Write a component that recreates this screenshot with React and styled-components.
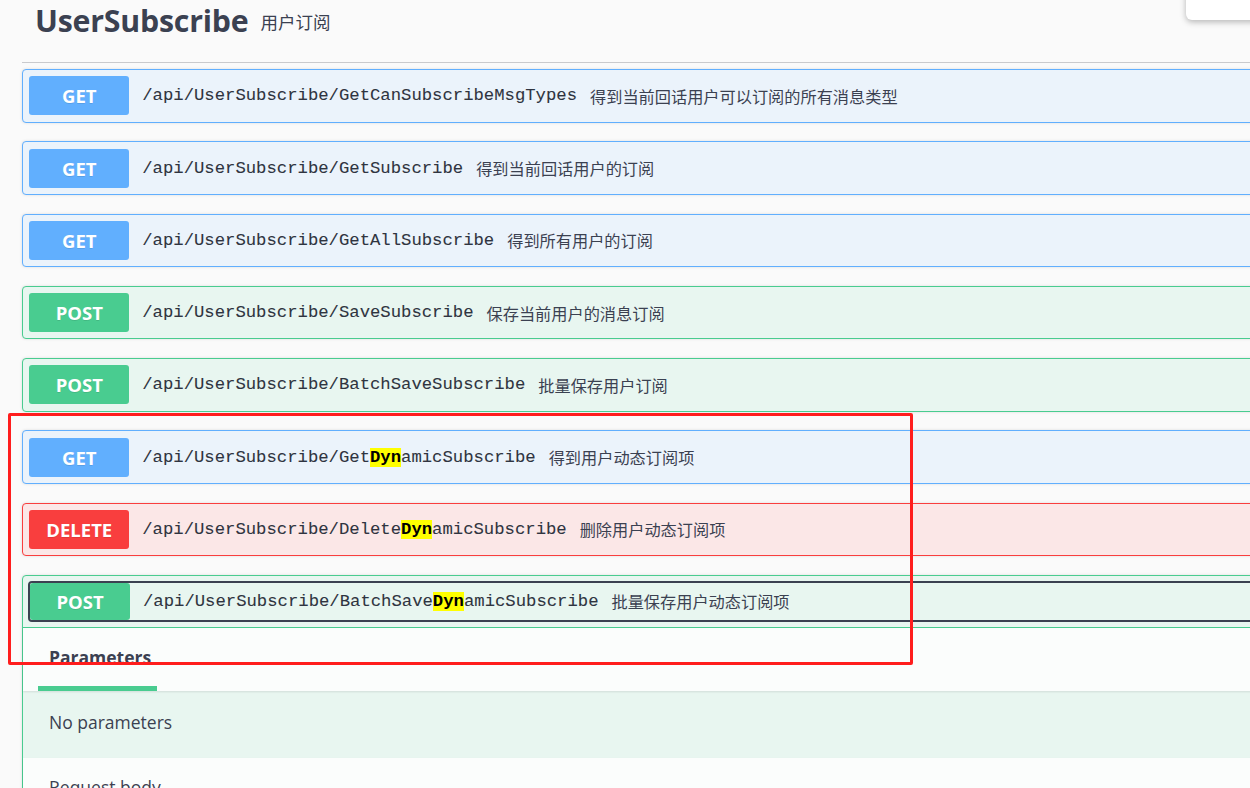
import React from "react";
import styled, { createGlobalStyle, css } from "styled-components";

const Global = createGlobalStyle`
  html, body { margin: 0; padding: 0; }
  body {
    background: #fafafa;
    overflow: hidden;
    font-family: "Open Sans", "Noto Sans CJK SC", sans-serif;
    color: #3b4151;
  }
`;

const METHODS = {
  GET: { main: "#61affe", bg: "#ebf3fb" },
  POST: { main: "#49cc90", bg: "#e8f6f0" },
  DELETE: { main: "#f93e3e", bg: "#fbe7e7" },
};

const Page = styled.div`
  position: relative;
  width: 1250px;
  height: 788px;
  overflow: hidden;
`;

const Content = styled.div`
  width: 1300px;
  padding-left: 22px;
`;

const TagHeader = styled.div`
  height: 62px;
  padding-left: 13px;
  border-bottom: 1px solid #c9cacd;
  margin-bottom: 6px;
  display: flex;
  align-items: flex-start;
`;

const TagTitle = styled.div`
  height: 40px;
  display: flex;
  align-items: center;
  gap: 12px;
`;

const TagName = styled.span`
  font-family: "Open Sans", sans-serif;
  font-weight: 700;
  font-size: 30.3px;
  color: #3b4151;
  letter-spacing: -0.2px;
`;

const TagDesc = styled.span`
  font-family: "Noto Sans CJK SC", sans-serif;
  font-size: 17.5px;
  color: #3b4151;
  margin-top: 2px;
`;

const OpBlock = styled.div`
  border: 1px solid ${(p) => METHODS[p.$m].main};
  background: ${(p) => METHODS[p.$m].bg};
  border-radius: 4px;
  margin-bottom: 18.75px;
  box-shadow: 0 0 3px rgba(0, 0, 0, 0.12);
`;

const Summary = styled.div`
  display: flex;
  align-items: center;
  padding: 6.25px;
  ${(p) =>
    p.$open &&
    css`
      padding: 5px 6px 5px 5px;
      border-bottom: 1px solid ${METHODS[p.$m].main};
    `}
`;

const Control = styled.div`
  flex: 1;
  display: flex;
  align-items: center;
  height: 41px;
  box-sizing: border-box;
  border: 2px solid #3b4151;
  border-radius: 4px;
`;

const Badge = styled.span`
  flex: none;
  width: 100px;
  height: ${(p) => (p.$open ? 37 : 39)}px;
  border-radius: 3px;
  background: ${(p) => METHODS[p.$m].main};
  color: #fff;
  font-family: "Open Sans", sans-serif;
  font-weight: 700;
  font-size: 18.5px;
  display: flex;
  align-items: center;
  justify-content: center;
  text-shadow: 0 1px 0 rgba(0, 0, 0, 0.1);
`;

const Path = styled.span`
  padding: 0 13px;
  font-family: "Liberation Mono", monospace;
  font-size: 17.25px;
  color: #2f3440;
  -webkit-text-stroke: 0.08px #2f3440;
  white-space: nowrap;
`;

const Mark = styled.mark`
  background: #ffff00;
  color: #000;
  font-weight: 700;
  -webkit-text-stroke: 0;
`;

const Desc = styled.span`
  font-family: "Noto Sans CJK SC", sans-serif;
  font-size: 16.2px;
  color: #3b4151;
  white-space: nowrap;
`;

const SectionHeader = styled.div`
  height: 63px;
  background: rgba(255, 255, 255, 0.8);
  box-shadow: 0 1px 2px rgba(0, 0, 0, 0.1);
  display: flex;
  align-items: stretch;
  padding-left: 15px;
`;

const Tab = styled.div`
  width: 119px;
  box-sizing: border-box;
  padding-left: 11px;
  display: flex;
  align-items: center;
  font-weight: 700;
  font-size: 17.5px;
  color: #3b4151;
  border-bottom: 5px solid #49cc90;
`;

const SectionTitle = styled.div`
  padding: 17px 0 0 11px;
  line-height: 24px;
  white-space: nowrap;
  font-size: 17.5px;
  color: #3b4151;
`;

const SectionBody = styled.div`
  height: 67px;
  box-sizing: border-box;
  padding: 0 0 5px 26px;
  display: flex;
  align-items: center;
  font-size: 17.5px;
  color: #3b4151;
`;

const Annotation = styled.div`
  position: absolute;
  left: 8px;
  top: 413px;
  width: 905px;
  height: 252px;
  box-sizing: border-box;
  border: 3px solid #ff1d1d;
  border-radius: 2px;
  pointer-events: none;
`;

const Popup = styled.div`
  position: absolute;
  left: 1186px;
  top: -12px;
  width: 100px;
  height: 32px;
  background: #fff;
  border-radius: 6px;
  box-shadow: 0 2px 6px rgba(0, 0, 0, 0.28);
`;

const ops = [
  { m: "GET", path: ["/api/UserSubscribe/GetCanSubscribeMsgTypes"], desc: "得到当前回话用户可以订阅的所有消息类型" },
  { m: "GET", path: ["/api/UserSubscribe/GetSubscribe"], desc: "得到当前回话用户的订阅" },
  { m: "GET", path: ["/api/UserSubscribe/GetAllSubscribe"], desc: "得到所有用户的订阅" },
  { m: "POST", path: ["/api/UserSubscribe/SaveSubscribe"], desc: "保存当前用户的消息订阅" },
  { m: "POST", path: ["/api/UserSubscribe/BatchSaveSubscribe"], desc: "批量保存用户订阅" },
  { m: "GET", path: ["/api/UserSubscribe/Get", "Dyn", "amicSubscribe"], desc: "得到用户动态订阅项" },
  { m: "DELETE", path: ["/api/UserSubscribe/Delete", "Dyn", "amicSubscribe"], desc: "删除用户动态订阅项" },
];

function PathText({ parts }) {
  return (
    <Path>
      {parts.map((p, i) => (i % 2 === 1 ? <Mark key={i}>{p}</Mark> : <React.Fragment key={i}>{p}</React.Fragment>))}
    </Path>
  );
}

export default function App() {
  return (
    <Page>
      <Global />
      <Content>
        <TagHeader>
          <TagTitle>
            <TagName>UserSubscribe</TagName>
            <TagDesc>用户订阅</TagDesc>
          </TagTitle>
        </TagHeader>
        {ops.map((o, i) => (
          <OpBlock key={i} $m={o.m}>
            <Summary $m={o.m}>
              <Badge $m={o.m}>{o.m}</Badge>
              <PathText parts={o.path} />
              <Desc>{o.desc}</Desc>
            </Summary>
          </OpBlock>
        ))}
        <OpBlock $m="POST">
          <Summary $m="POST" $open>
            <Control>
              <Badge $m="POST" $open>POST</Badge>
              <PathText parts={["/api/UserSubscribe/BatchSave", "Dyn", "amicSubscribe"]} />
              <Desc>批量保存用户动态订阅项</Desc>
            </Control>
          </Summary>
          <SectionHeader>
            <Tab>Parameters</Tab>
          </SectionHeader>
          <SectionBody>No parameters</SectionBody>
          <SectionHeader>
            <SectionTitle>Request body</SectionTitle>
          </SectionHeader>
        </OpBlock>
      </Content>
      <Annotation />
      <Popup />
    </Page>
  );
}
